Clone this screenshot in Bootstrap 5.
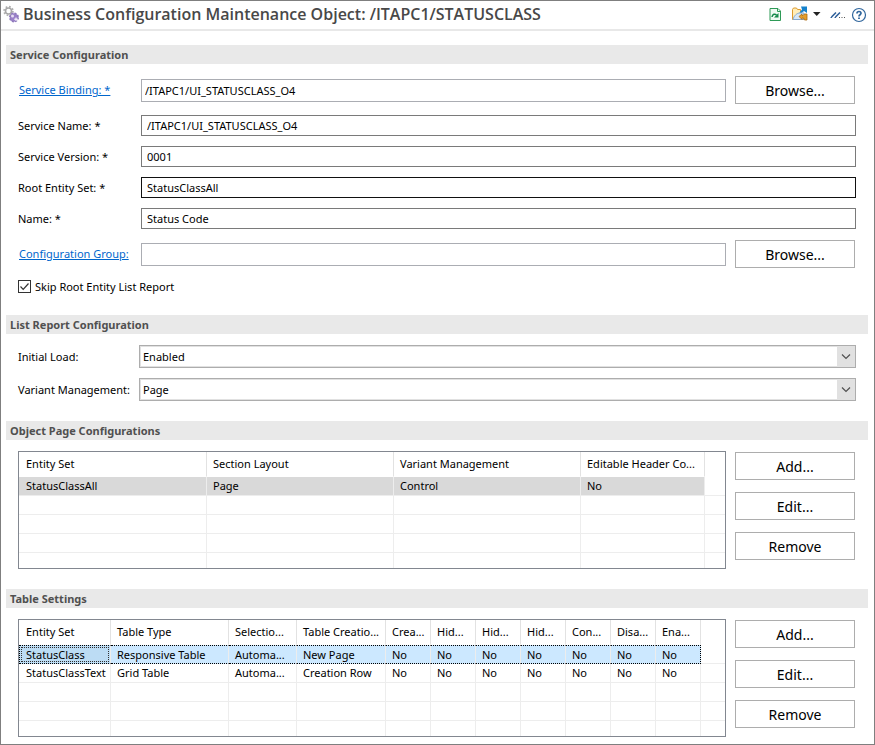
<!DOCTYPE html>
<html lang="en">
<head>
<meta charset="utf-8">
<meta name="viewport" content="width=device-width, initial-scale=1">
<title>Business Configuration Maintenance Object</title>
<link href="https://cdn.jsdelivr.net/npm/bootstrap@5.3.0/dist/css/bootstrap.min.css" rel="stylesheet">
<style>
body{font-family:"Noto Sans","Open Sans",sans-serif;font-size:11px;line-height:16px;color:#000;background:#fff}
.editor{border:1px solid #7f7f7f;min-height:100vh;padding-bottom:6px}
.editor-head{height:30px;border-bottom:2px solid #e8e8e8;padding:0 7px 3px 2px}
.editor-head h1{font-family:"Open Sans",sans-serif;font-size:16px;line-height:20px;font-weight:600;color:#484848;margin:0 0 0 4px}
.tool{border:0;background:none;padding:0;display:flex}
.tool svg,.editor-head svg{display:block}
.sec{padding:0 6px 0 5px;margin-bottom:20px}
.sec-first{margin-top:14px}
.sec h2{font-size:11px;line-height:19px;font-weight:700;color:#505050;background:#e9e9e9;margin:0;padding:0 4px}
.sec-body{padding:11px 12px 0 12px}
.sec-first .sec-body{padding-top:12px}
.frow{display:flex;align-items:center}
.frow>label,.frow>a{flex:none;width:123px}
.frow>a{color:#0066cc;padding-left:1px}
.txt{border:1px solid #7a7a7a;border-radius:0;padding:0 5px;height:21px;font-size:11px;line-height:16px;color:#000;flex:1;min-width:0}
.txt-ro{border-color:#abadb3;height:23px;padding:0 3px}
.txt-dark{border-color:#111}
.btn-win{border:1px solid #adadad;border-radius:0;background:#fff;color:#000;width:120px;height:28px;font-size:14px;line-height:20px;padding:1px 0 0;flex:none}
.sel{border:1px solid #adadad;border-radius:0;box-shadow:inset 0 0 0 1px #e1e1e1;height:23px;font-size:11px;line-height:16px;padding:0 22px 0 3px;color:#000;flex:1;min-width:0;
background:url("data:image/svg+xml,%3Csvg xmlns='http://www.w3.org/2000/svg' viewBox='0 0 18 21'%3E%3Cpath d='M5 8.5l4 4 4-4' fill='none' stroke='%23505050' stroke-width='1.2'/%3E%3C/svg%3E") right center/18px 21px no-repeat,linear-gradient(#e1e1e1,#e1e1e1) right/18px 100% no-repeat #fff}
.frow.combo>label{width:121px}
.form-check-input.tick{width:13px;height:13px;margin:0;border:1px solid #333;border-radius:0}
.form-check-input.tick:checked{background:url("data:image/svg+xml,%3Csvg xmlns='http://www.w3.org/2000/svg' viewBox='0 0 11 11'%3E%3Cpath d='M1.5 5.5l2.7 2.8 5.3-5.8' fill='none' stroke='%23333' stroke-width='1.2'/%3E%3C/svg%3E") center/11px 11px no-repeat #fff;border-color:#333}
.tick-row{height:17px}
.grid-box{border:1px solid #828790;height:118px;overflow:hidden;flex:1;min-width:0}
.grid-box table{table-layout:fixed;width:100%;border-collapse:separate;border-spacing:0;margin:0}
.grid-box th,.grid-box td{height:19px;padding:0 2px 0 6px;font-weight:400;white-space:nowrap;overflow:hidden;border-right:1px solid #ededed;border-bottom:1px solid #ededed;line-height:16px}
.grid-box th{height:25px;border-bottom-color:#fff;border-right-color:#e2e2e2}
.grid-box th:first-child,.grid-box td:first-child{padding-left:7px}
.grid-box th:last-child,.grid-box td:last-child{border-right:0;padding:0}
.picked td:not(:last-child){background:#d9d9d9}
.focused td:not(:last-child){background:#cce8ff;border-top:1px dotted #000;border-bottom:1px dotted #000;line-height:15px}
.focused td:first-child{background:#bcdcf4;outline:1px dotted #333;outline-offset:-3px;border-left:1px dotted #000;padding-left:6px}
.focused td:nth-last-child(2){border-right:1px dotted #000}
.w188{width:188px}.w187{width:187px}.w124{width:124px}.w92{width:92px}.w118{width:118px}.w68{width:68px}.w89{width:89px}.w45{width:45px}
.btn-col{display:flex;flex-direction:column;gap:12px;padding:1px 0 0}
.side{margin:0 1px 0 9px}
.gap-lg{margin-top:11px}
.gap-md{margin-top:10px}
</style>
<script src="https://cdn.jsdelivr.net/npm/bootstrap@5.3.0/dist/js/bootstrap.bundle.min.js"></script>
</head>
<body>
<main class="editor">
<header class="editor-head d-flex align-items-center">
  <svg width="16" height="18" viewBox="0 0 16 18" aria-hidden="true">
    <circle cx="5.500" cy="6" r="4.400" fill="none" stroke="#b0b0b0" stroke-width="1.800" stroke-dasharray="1.700 1.750"/>
    <circle cx="5.500" cy="6" r="3" fill="#fff" stroke="#a8a8a8" stroke-width="1.600"/>
    <circle cx="11" cy="12.500" r="4.200" fill="#9a80c8" stroke="#8d78ba" stroke-width="1.600" stroke-dasharray="2 1.300"/>
    <circle cx="9.500" cy="11" r="1.500" fill="#e6def3"/><path d="M13 12.500v3.500M11.200 14.200h3.600" stroke="#fff" stroke-width="1"/>
  </svg>
  <h1 class="flex-grow-1 text-truncate">Business Configuration Maintenance Object: /ITAPC1/STATUSCLASS</h1>
  <div class="d-flex align-items-center">
    <button class="tool me-2" type="button" aria-label="Refresh"><svg width="15" height="18" viewBox="0 0 15 18"><path d="M2 3.500h8l2.500 2.500v9.500H2z" fill="#f1faf3" stroke="#2e9a57"/><path d="M9.500 3.500v3h3" fill="none" stroke="#2e9a57"/><path d="M4 12c.5-3 3-3.500 4.500-2" fill="none" stroke="#16894a" stroke-width="1.500"/><path d="M10.500 8v4.500H6z" fill="#16894a"/></svg></button>
    <button class="tool" type="button" aria-label="Open with"><svg width="17" height="18" viewBox="0 0 17 18"><path d="M1.500 14.500V4.500l1-1.500h3l1 1.500h3v10z" fill="#ffedb8" stroke="#dc9a2e"/><path d="M10 1.500h6v6.500l-3-2-3.500 3-1-1.500 2.500-3z" fill="#1682cc"/><path d="M2 14.500c1-4 4-6.500 7-6.500h4v6.500z" fill="#d8e8f7" stroke="#86a9cf"/><path d="M8 11.500L11 9v1.500h1L13.500 9h2.500v6h-2.500L12.500 13H11v1.500z" fill="#e39d2c" stroke="#a96b12" stroke-width=".8"/></svg></button>
    <button class="tool ms-1 me-1" type="button" aria-label="More"><svg width="10" height="6" viewBox="0 0 10 6"><path d="M1 1h7.500L4.750 5z" fill="#222"/></svg></button>
    <button class="tool ms-1 me-1" type="button" aria-label="Comments"><svg width="17" height="12" viewBox="0 0 17 12"><path d="M1.500 9l4.500-4.500M5.500 9L10 4.500" stroke="#31619b" stroke-width="1.600"/><path d="M.5 9.500H2M4.500 9.500H6" stroke="#31619b"/><path d="M9 9.500h1M11.500 9.500h1M14 9.500h1" stroke="#555"/></svg></button>
    <button class="tool" type="button" aria-label="Help"><svg width="16" height="18" viewBox="0 0 16 18"><circle cx="8" cy="10" r="6.500" fill="#fff" stroke="#2f659c" stroke-width="1.200"/><path d="M6 8.500C6 5.800 10 5.900 10 8.300 10 9.800 8 9.700 8 11.400" fill="none" stroke="#2f659c" stroke-width="1.700"/><path d="M8 12.500v1.600" stroke="#2f659c" stroke-width="1.800"/></svg></button>
  </div>
</header>

<section class="sec sec-first">
  <h2>Service Configuration</h2>
  <div class="sec-body">
    <div class="frow"><a href="#">Service Binding: *</a><input class="txt txt-ro" aria-label="Service Binding" value="/ITAPC1/UI_STATUSCLASS_O4"><button class="btn btn-win side" type="button">Browse...</button></div>
    <div class="frow gap-lg"><label for="f1">Service Name: *</label><input id="f1" class="txt" value="/ITAPC1/UI_STATUSCLASS_O4"></div>
    <div class="frow gap-md"><label for="f2">Service Version: *</label><input id="f2" class="txt" value="0001"></div>
    <div class="frow gap-md"><label for="f3">Root Entity Set: *</label><input id="f3" class="txt txt-dark" value="StatusClassAll"></div>
    <div class="frow gap-md"><label for="f4">Name: *</label><input id="f4" class="txt" value="Status Code"></div>
    <div class="frow gap-lg"><a href="#">Configuration Group:</a><input class="txt txt-ro" aria-label="Configuration Group"><button class="btn btn-win side" type="button">Browse...</button></div>
    <div class="tick-row d-flex align-items-center gap-md"><input class="form-check-input tick" type="checkbox" id="skip" checked><label for="skip" class="ps-1">Skip Root Entity List Report</label></div>
  </div>
</section>

<section class="sec">
  <h2>List Report Configuration</h2>
  <div class="sec-body">
    <div class="frow combo"><label for="s1">Initial Load:</label><select id="s1" class="form-select sel"><option>Enabled</option></select></div>
    <div class="frow combo gap-md"><label for="s2">Variant Management:</label><select id="s2" class="form-select sel"><option>Page</option></select></div>
  </div>
</section>

<section class="sec">
  <h2>Object Page Configurations</h2>
  <div class="sec-body d-flex">
    <div class="grid-box"><table>
      <colgroup><col class="w188"><col class="w187"><col class="w187"><col class="w124"><col></colgroup>
      <thead><tr><th>Entity Set</th><th>Section Layout</th><th>Variant Management</th><th>Editable Header Co...</th><th></th></tr></thead>
      <tbody>
        <tr class="picked"><td>StatusClassAll</td><td>Page</td><td>Control</td><td>No</td><td></td></tr>
        <tr><td></td><td></td><td></td><td></td><td></td></tr>
        <tr><td></td><td></td><td></td><td></td><td></td></tr>
        <tr><td></td><td></td><td></td><td></td><td></td></tr>
        <tr><td></td><td></td><td></td><td></td><td></td></tr>
      </tbody></table></div>
    <div class="btn-col side"><button class="btn btn-win" type="button">Add...</button><button class="btn btn-win" type="button">Edit...</button><button class="btn btn-win" type="button">Remove</button></div>
  </div>
</section>

<section class="sec mb-0">
  <h2>Table Settings</h2>
  <div class="sec-body d-flex">
    <div class="grid-box"><table>
      <colgroup><col class="w92"><col class="w118"><col class="w68"><col class="w89"><col class="w45"><col class="w45"><col class="w45"><col class="w45"><col class="w45"><col class="w45"><col class="w45"><col></colgroup>
      <thead><tr><th>Entity Set</th><th>Table Type</th><th>Selectio...</th><th>Table Creatio...</th><th>Crea...</th><th>Hid...</th><th>Hid...</th><th>Hid...</th><th>Con...</th><th>Disa...</th><th>Ena...</th><th></th></tr></thead>
      <tbody>
        <tr class="focused"><td>StatusClass</td><td>Responsive Table</td><td>Automa...</td><td>New Page</td><td>No</td><td>No</td><td>No</td><td>No</td><td>No</td><td>No</td><td>No</td><td></td></tr>
        <tr><td>StatusClassText</td><td>Grid Table</td><td>Automa...</td><td>Creation Row</td><td>No</td><td>No</td><td>No</td><td>No</td><td>No</td><td>No</td><td>No</td><td></td></tr>
        <tr><td></td><td></td><td></td><td></td><td></td><td></td><td></td><td></td><td></td><td></td><td></td><td></td></tr>
        <tr><td></td><td></td><td></td><td></td><td></td><td></td><td></td><td></td><td></td><td></td><td></td><td></td></tr>
        <tr><td></td><td></td><td></td><td></td><td></td><td></td><td></td><td></td><td></td><td></td><td></td><td></td></tr>
      </tbody></table></div>
    <div class="btn-col side"><button class="btn btn-win" type="button">Add...</button><button class="btn btn-win" type="button">Edit...</button><button class="btn btn-win" type="button">Remove</button></div>
  </div>
</section>
</main>
</body>
</html>
